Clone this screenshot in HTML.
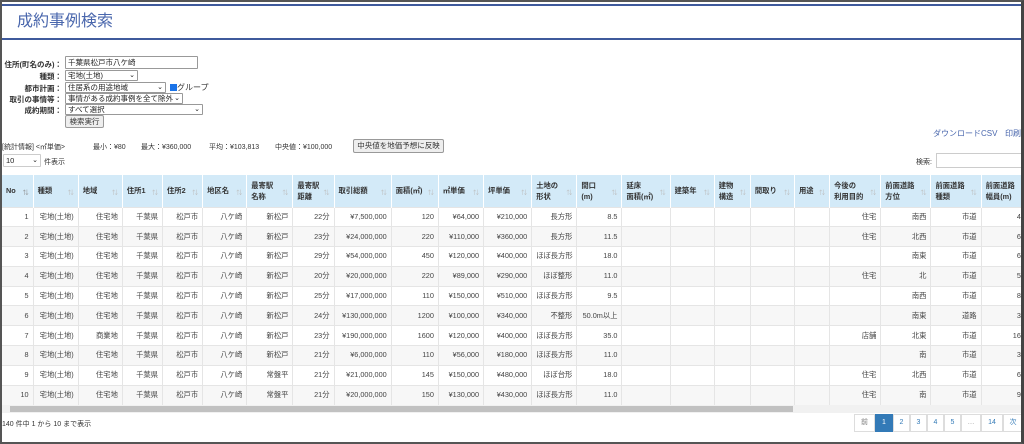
<!DOCTYPE html>
<html><head><meta charset="utf-8">
<style>
*{box-sizing:border-box;margin:0;padding:0}
body{width:1024px;height:444px;overflow:hidden;background:#fff;font-family:"Liberation Sans","Noto Sans CJK JP",sans-serif;color:#333;position:relative}
.frame{position:absolute;left:0;top:0;width:1024px;height:444px;border:2px solid #555;border-right:3px solid #444;z-index:5;pointer-events:none}
.l1{position:absolute;left:2px;right:3px;top:4px;height:2px;background:#3f5a9c}
.l2{position:absolute;left:2px;right:3px;top:38px;height:2px;background:#3f5a9c}
h1{position:absolute;left:17px;top:12px;font-size:16px;font-weight:normal;color:#4a67ad;line-height:20px}
.f{position:absolute;font-size:7.5px;font-weight:bold;color:#333;text-align:right;width:62px;left:0}
.in{position:absolute;border:1px solid #999;background:#fff;font-size:7.5px;height:11px;line-height:9px;padding-left:2px;border-radius:1px;color:#222}
.in .ar{position:absolute;right:2px;top:0;font-size:7px}
.btn{position:absolute;border:1px solid #999;background:#eee;font-size:7.5px;line-height:12px;text-align:center;border-radius:2px;color:#333}
.s{position:absolute;font-size:7px;color:#333;top:142px}
.wrap{position:absolute;left:2px;top:175px;width:1019px;height:230px;overflow:hidden}
table{border-collapse:collapse;table-layout:fixed;font-size:7.3px;width:1030px}
th{background:#d3eaf8;height:32px;text-align:left;vertical-align:middle;padding:0 4px;font-weight:bold;border-right:1px solid #fff;line-height:11px;position:relative;color:#333}
th i{position:absolute;right:4px;bottom:7px;font-style:normal;color:#bbb;font-size:6px;font-weight:normal}
td{height:19.8px;line-height:18px;vertical-align:middle;text-align:right;padding:0 4px;border-right:1px solid #e5e5e5;border-top:1px solid #e5e5e5;white-space:nowrap;overflow:hidden;color:#444}
tr:nth-child(odd) td{background:#f7f7f7}
.sb{position:absolute;left:2px;top:405px;width:1019px;height:8px;background:#f1f1f1}
.sb div{position:absolute;left:8px;top:1px;width:783px;height:6px;background:#c1c1c1}
.pg{position:absolute;top:414px;height:18px;border:1px solid #ddd;font-size:7px;color:#337ab7;line-height:16px;text-align:center}
</style></head><body>
<div class="frame"></div>
<div class="l1"></div><div class="l2"></div>
<h1>成約事例検索</h1>
<div class="f" style="top:59px">住所(町名のみ)：</div>
<div class="in" style="left:65px;top:56px;width:133px;height:13px;line-height:11px">千葉県松戸市八ケ崎</div>
<div class="f" style="top:71px">種類：</div>
<div class="in" style="left:65px;top:70px;width:73px">宅地(土地)<span class="ar">⌄</span></div>
<div class="f" style="top:83px">都市計画：</div>
<div class="in" style="left:65px;top:82px;width:101px">住居系の用途地域<span class="ar">⌄</span></div>
<div style="position:absolute;left:170px;top:82px;font-size:8px"><span style="display:inline-block;width:7px;height:7px;background:#1a73e8;vertical-align:-1px"></span>グループ</div>
<div class="f" style="top:94px">取引の事情等：</div>
<div class="in" style="left:65px;top:93px;width:118px">事情がある成約事例を全て除外<span class="ar">⌄</span></div>
<div class="f" style="top:105px">成約期間：</div>
<div class="in" style="left:65px;top:104px;width:138px">すべて選択<span class="ar">⌄</span></div>
<div class="btn" style="left:65px;top:115px;width:39px;height:13px">検索実行</div>
<div class="s" style="left:2px">[統計情報] &lt;㎡単価&gt;</div>
<div class="s" style="left:93px">最小：¥80</div>
<div class="s" style="left:141px">最大：¥360,000</div>
<div class="s" style="left:209px">平均：¥103,813</div>
<div class="s" style="left:275px">中央値：¥100,000</div>
<div class="btn" style="left:353px;top:139px;width:91px;height:14px">中央値を地価予想に反映</div>
<div class="in" style="left:3px;top:154px;width:38px;height:13px;line-height:11px;border-color:#ccc">10<span class="ar">⌄</span></div>
<div style="position:absolute;left:44px;top:157px;font-size:7px">件表示</div>
<div style="position:absolute;left:933px;top:128px;font-size:8px;color:#4a67ad">ダウンロードCSV</div>
<div style="position:absolute;left:1005px;top:128px;font-size:8px;color:#4a67ad">印刷</div>
<div style="position:absolute;left:916px;top:157px;font-size:7px">検索:</div>
<div style="position:absolute;left:936px;top:153px;width:90px;height:15px;border:1px solid #ccc"></div>
<div class="wrap">
<table>
<colgroup><col style="width:31px"><col style="width:45px"><col style="width:44px"><col style="width:40px"><col style="width:40px"><col style="width:44px"><col style="width:46px"><col style="width:41px"><col style="width:57px"><col style="width:47px"><col style="width:45px"><col style="width:48px"><col style="width:45px"><col style="width:45px"><col style="width:48px"><col style="width:44px"><col style="width:36px"><col style="width:44px"><col style="width:35px"><col style="width:51px"><col style="width:50px"><col style="width:50px"><col style="width:50px"></colgroup>
<tr><th>No<i style="color:#888">⇅</i></th><th>種類<i>⇅</i></th><th>地域<i>⇅</i></th><th>住所1<i>⇅</i></th><th>住所2<i>⇅</i></th><th>地区名<i>⇅</i></th><th>最寄駅<br>名称<i>⇅</i></th><th>最寄駅<br>距離<i>⇅</i></th><th>取引総額<i>⇅</i></th><th>面積(㎡)<i>⇅</i></th><th>㎡単価<i>⇅</i></th><th>坪単価<i>⇅</i></th><th>土地の<br>形状<i>⇅</i></th><th>間口<br>(m)<i>⇅</i></th><th>延床<br>面積(㎡)<i>⇅</i></th><th>建築年<i>⇅</i></th><th>建物<br>構造<i>⇅</i></th><th>間取り<i>⇅</i></th><th>用途<i>⇅</i></th><th>今後の<br>利用目的<i>⇅</i></th><th>前面道路<br>方位<i>⇅</i></th><th>前面道路<br>種類<i>⇅</i></th><th>前面道路<br>幅員(m)<i>⇅</i></th></tr>
<tr><td>1</td><td>宅地(土地)</td><td>住宅地</td><td>千葉県</td><td>松戸市</td><td>八ケ崎</td><td>新松戸</td><td>22分</td><td>¥7,500,000</td><td>120</td><td>¥64,000</td><td>¥210,000</td><td>長方形</td><td>8.5</td><td></td><td></td><td></td><td></td><td></td><td>住宅</td><td>南西</td><td>市道</td><td>4.0</td></tr>
<tr><td>2</td><td>宅地(土地)</td><td>住宅地</td><td>千葉県</td><td>松戸市</td><td>八ケ崎</td><td>新松戸</td><td>23分</td><td>¥24,000,000</td><td>220</td><td>¥110,000</td><td>¥360,000</td><td>長方形</td><td>11.5</td><td></td><td></td><td></td><td></td><td></td><td>住宅</td><td>北西</td><td>市道</td><td>6.0</td></tr>
<tr><td>3</td><td>宅地(土地)</td><td>住宅地</td><td>千葉県</td><td>松戸市</td><td>八ケ崎</td><td>新松戸</td><td>29分</td><td>¥54,000,000</td><td>450</td><td>¥120,000</td><td>¥400,000</td><td>ほぼ長方形</td><td>18.0</td><td></td><td></td><td></td><td></td><td></td><td></td><td>南東</td><td>市道</td><td>6.0</td></tr>
<tr><td>4</td><td>宅地(土地)</td><td>住宅地</td><td>千葉県</td><td>松戸市</td><td>八ケ崎</td><td>新松戸</td><td>20分</td><td>¥20,000,000</td><td>220</td><td>¥89,000</td><td>¥290,000</td><td>ほぼ整形</td><td>11.0</td><td></td><td></td><td></td><td></td><td></td><td>住宅</td><td>北</td><td>市道</td><td>5.0</td></tr>
<tr><td>5</td><td>宅地(土地)</td><td>住宅地</td><td>千葉県</td><td>松戸市</td><td>八ケ崎</td><td>新松戸</td><td>25分</td><td>¥17,000,000</td><td>110</td><td>¥150,000</td><td>¥510,000</td><td>ほぼ長方形</td><td>9.5</td><td></td><td></td><td></td><td></td><td></td><td></td><td>南西</td><td>市道</td><td>8.0</td></tr>
<tr><td>6</td><td>宅地(土地)</td><td>住宅地</td><td>千葉県</td><td>松戸市</td><td>八ケ崎</td><td>新松戸</td><td>24分</td><td>¥130,000,000</td><td>1200</td><td>¥100,000</td><td>¥340,000</td><td>不整形</td><td>50.0m以上</td><td></td><td></td><td></td><td></td><td></td><td></td><td>南東</td><td>道路</td><td>3.6</td></tr>
<tr><td>7</td><td>宅地(土地)</td><td>商業地</td><td>千葉県</td><td>松戸市</td><td>八ケ崎</td><td>新松戸</td><td>23分</td><td>¥190,000,000</td><td>1600</td><td>¥120,000</td><td>¥400,000</td><td>ほぼ長方形</td><td>35.0</td><td></td><td></td><td></td><td></td><td></td><td>店舗</td><td>北東</td><td>市道</td><td>16.0</td></tr>
<tr><td>8</td><td>宅地(土地)</td><td>住宅地</td><td>千葉県</td><td>松戸市</td><td>八ケ崎</td><td>新松戸</td><td>21分</td><td>¥6,000,000</td><td>110</td><td>¥56,000</td><td>¥180,000</td><td>ほぼ長方形</td><td>11.0</td><td></td><td></td><td></td><td></td><td></td><td></td><td>南</td><td>市道</td><td>3.8</td></tr>
<tr><td>9</td><td>宅地(土地)</td><td>住宅地</td><td>千葉県</td><td>松戸市</td><td>八ケ崎</td><td>常盤平</td><td>21分</td><td>¥21,000,000</td><td>145</td><td>¥150,000</td><td>¥480,000</td><td>ほぼ台形</td><td>18.0</td><td></td><td></td><td></td><td></td><td></td><td>住宅</td><td>北西</td><td>市道</td><td>6.0</td></tr>
<tr><td>10</td><td>宅地(土地)</td><td>住宅地</td><td>千葉県</td><td>松戸市</td><td>八ケ崎</td><td>常盤平</td><td>21分</td><td>¥20,000,000</td><td>150</td><td>¥130,000</td><td>¥430,000</td><td>ほぼ長方形</td><td>11.0</td><td></td><td></td><td></td><td></td><td></td><td>住宅</td><td>南</td><td>市道</td><td>9.0</td></tr>
</table>
</div>
<div class="sb"><div></div></div>
<div style="position:absolute;left:2px;top:419px;font-size:7px">140 件中 1 から 10 まで表示</div>
<div class="pg" style="left:854px;width:21px;color:#777">前</div>
<div class="pg" style="left:875px;width:18px;background:#337ab7;color:#fff;border-color:#337ab7">1</div>
<div class="pg" style="left:893px;width:17px">2</div>
<div class="pg" style="left:910px;width:17px">3</div>
<div class="pg" style="left:927px;width:17px">4</div>
<div class="pg" style="left:944px;width:17px">5</div>
<div class="pg" style="left:961px;width:20px;color:#999">…</div>
<div class="pg" style="left:981px;width:22px">14</div>
<div class="pg" style="left:1003px;width:20px">次</div>
</body></html>
